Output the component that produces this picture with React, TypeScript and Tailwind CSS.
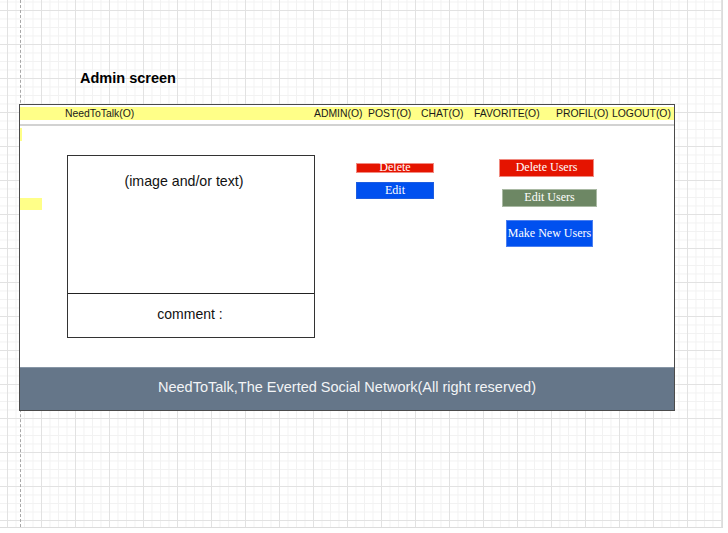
const sans = { fontFamily: '"Liberation Sans", Arial, sans-serif' };
const serif = { fontFamily: '"Liberation Serif", "Times New Roman", serif' };

const navItems = [
  { label: "NeedToTalk(O)", w: "w-[249px]" },
  { label: "ADMIN(O)", w: "w-[54px]" },
  { label: "POST(O)", w: "w-[53px]" },
  { label: "CHAT(O)", w: "w-[53px]" },
  { label: "FAVORITE(O)", w: "w-[82px]" },
  { label: "PROFIL(O)", w: "w-[56px]" },
  { label: "LOGOUT(O)", w: "w-auto" },
];

export default function App() {
  return (
    <div className="w-[728px] h-[533px] bg-white overflow-hidden" style={sans}>
      {/* canvas with draw.io style grid */}
      <div className="relative w-[723px] h-[528px] border-r border-b border-[#dcdcdc] bg-white bg-[linear-gradient(to_right,#e2e2e2_1px,transparent_1px),linear-gradient(to_bottom,#e2e2e2_1px,transparent_1px),linear-gradient(to_right,#f2f2f2_1px,transparent_1px),linear-gradient(to_bottom,#f2f2f2_1px,transparent_1px)] bg-[size:34px_34px,34px_34px,8.5px_8.5px,8.5px_8.5px] bg-[position:7px_10px]">
        {/* page boundary */}
        <div className="absolute left-[20px] top-0 h-full border-l border-dashed border-[#a8a8a8]" />

        <div className="relative pt-[70px]">
          <div className="pl-[80px] text-[14.5px] leading-[17px] font-bold text-black">
            Admin screen
          </div>

          {/* screen frame */}
          <div className="relative ml-[19px] mt-[17px] w-[656px] h-[307px] border border-[#4a4a4a] bg-white flex flex-col">
            {/* header */}
            <div className="mt-[2px] h-[13px] bg-[#ffff88] flex items-center pl-[45px] text-[10.4px] leading-[13px] text-[#1a1a1a] whitespace-nowrap">
              {navItems.map((n) => (
                <span key={n.label} className={n.w}>
                  {n.label}
                </span>
              ))}
            </div>
            <div className="mt-[4px] h-[2px] bg-[#d2d2d2]" />

            {/* body */}
            <div className="flex-1 flex items-start pl-[47px] pt-[29px]">
              <div className="w-[248px] h-[183px] border border-[#333] flex flex-col">
                <div className="h-[138px] border-b border-[#222] flex justify-center pt-[17px] pr-[14px] text-[14.2px] leading-[17px] text-[#111]">
                  (image and/or text)
                </div>
                <div className="flex-1 flex items-center justify-center pb-[3px] pr-[2px] text-[14px] text-[#111]">
                  comment :
                </div>
              </div>

              <div className="ml-[41px] mt-[8px] w-[78px] flex flex-col text-white text-[12px]" style={serif}>
                <div className="h-[10px] bg-[#e51400] border border-[#f28b82] flex items-center justify-center leading-[10px] pb-[2px]">
                  Delete
                </div>
                <div className="mt-[9px] h-[17px] bg-[#0050ef] border border-[#1d5de0] flex items-center justify-center pb-[1px]">
                  Edit
                </div>
              </div>

              <div className="ml-[65px] mt-[4px] flex flex-col items-start text-white text-[12px]" style={serif}>
                <div className="w-[95px] h-[18px] bg-[#e51400] border border-[#f08a80] flex items-center justify-center pb-[2px]">
                  Delete Users
                </div>
                <div className="ml-[3px] mt-[12px] w-[95px] h-[18px] bg-[#6d8764] border border-[#a9b9a3] flex items-center justify-center pb-[2px]">
                  Edit Users
                </div>
                <div className="ml-[7px] mt-[13px] w-[87px] h-[27px] bg-[#0050ef] border border-[#4b7ff0] flex items-center justify-center pb-[1px]">
                  Make New Users
                </div>
              </div>
            </div>

            {/* footer */}
            <div className="h-[43px] bg-[#657689] border-t border-[#8796a6] flex items-center justify-center pb-[3px] text-[14.5px] text-[#f2f4f6]">
              NeedToTalk,The Everted Social Network(All right reserved)
            </div>

            {/* yellow markers on the left edge */}
            <div className="absolute left-0 top-[23px] w-[2px] h-[13px] bg-[#ffff88]" />
            <div className="absolute left-0 top-[93px] w-[22px] h-[12px] bg-[#ffff88]" />
          </div>
        </div>
      </div>
    </div>
  );
}
